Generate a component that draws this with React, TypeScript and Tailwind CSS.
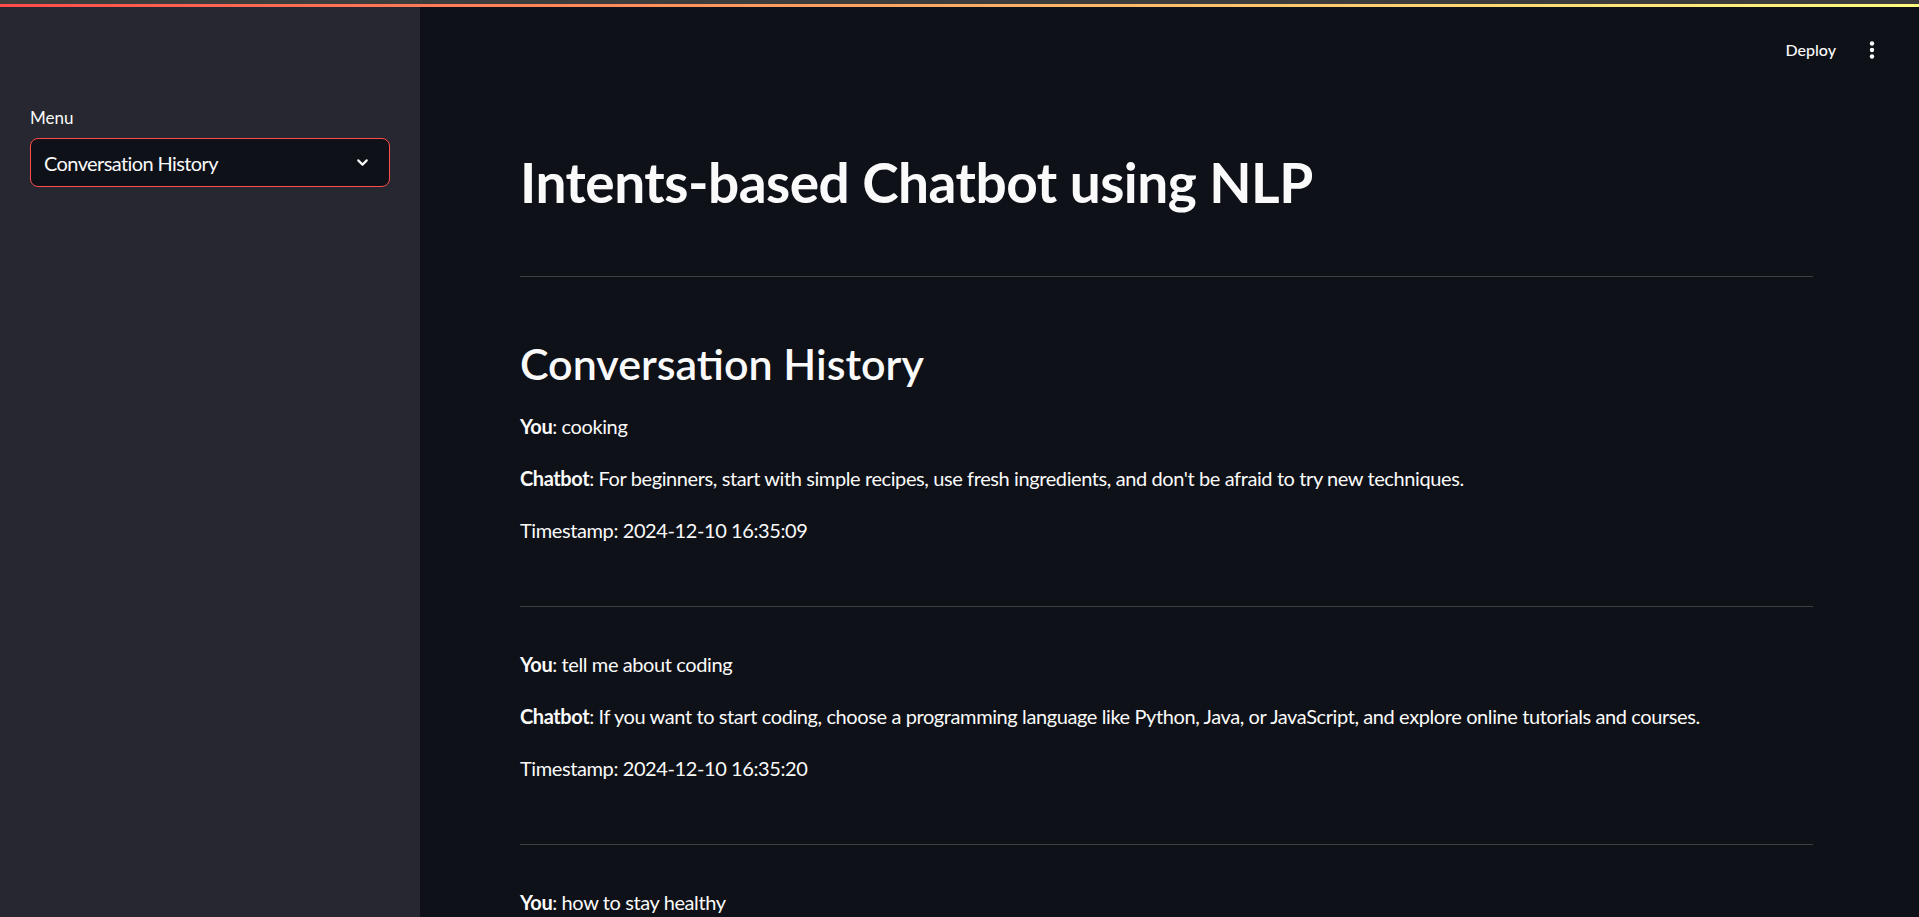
import { ChevronDown } from "lucide-react";

type Entry = { you: string; bot: string; time: string };

const history: Entry[] = [
  {
    you: "cooking",
    bot: "For beginners, start with simple recipes, use fresh ingredients, and don't be afraid to try new techniques.",
    time: "2024-12-10 16:35:09",
  },
  {
    you: "tell me about coding",
    bot: "If you want to start coding, choose a programming language like Python, Java, or JavaScript, and explore online tutorials and courses.",
    time: "2024-12-10 16:35:20",
  },
  {
    you: "how to stay healthy",
    bot: "Eat a balanced diet, exercise regularly, get enough sleep, and manage stress to stay healthy.",
    time: "2024-12-10 16:35:31",
  },
];

const Divider = ({ className = "" }: { className?: string }) => (
  <div className={`h-px w-full bg-[#3d3f44] ${className}`} />
);

const HistoryItem = ({ entry }: { entry: Entry }) => (
  <div className="flex flex-col gap-[20px] text-[20px] leading-[32px] tracking-[-0.4px]">
    <p>
      <span className="font-bold">You</span>: {entry.you}
    </p>
    <p>
      <span className="font-bold">Chatbot</span>: {entry.bot}
    </p>
    <p>Timestamp: {entry.time}</p>
  </div>
);

export default function App() {
  return (
    <div className="flex h-[917px] w-full flex-col overflow-hidden bg-[#0e1117] font-['Lato','Liberation_Sans',sans-serif] text-[#fafafa]">
      <div className="h-[4px] shrink-0 bg-[#3c3c3c]" />
      <div className="h-[3px] shrink-0 bg-gradient-to-r from-[#ff4b4b] to-[#fffd80]" />

      <div className="flex min-h-0 flex-1">
        {/* sidebar */}
        <aside className="w-[420px] shrink-0 bg-[#262730] px-[30px] pt-[100px]">
          <label className="block text-[17px] leading-[22px]">Menu</label>
          <div className="mt-[9px] flex h-[49px] w-[360px] items-center justify-between rounded-[8px] border border-[#ff4b4b] bg-[#0e1117] pl-[13px] pr-[18px]">
            <span className="text-[20px] tracking-[-0.6px]">Conversation History</span>
            <ChevronDown className="h-[17px] w-[17px]" strokeWidth={3} />
          </div>
        </aside>

        {/* main */}
        <main className="flex min-w-0 flex-1 flex-col">
          <header className="flex h-[85px] shrink-0 items-center justify-end gap-[32px] pr-[43px]">
            <span className="text-[16px] font-medium">Deploy</span>
            <svg width="8" height="20" viewBox="0 0 8 20" fill="#fafafa">
              <circle cx="4" cy="3.5" r="2.2" />
              <circle cx="4" cy="10" r="2.2" />
              <circle cx="4" cy="16.5" r="2.2" />
            </svg>
          </header>

          <div className="ml-[100px] mr-[106px]">
            <h1 className="mt-[57px] text-[55px] font-bold leading-[66px] tracking-[-0.5px]">
              Intents-based Chatbot using NLP
            </h1>
            <Divider className="mt-[61px]" />

            <h2 className="mt-[63px] text-[43px] font-semibold leading-[48px]">
              Conversation History
            </h2>

            {history.map((entry, i) => (
              <div key={i}>
                <div className={i === 0 ? "mt-[22px]" : "mt-[41px]"}>
                  <HistoryItem entry={entry} />
                </div>
                <Divider className="mt-[60px]" />
              </div>
            ))}
          </div>
        </main>
      </div>
    </div>
  );
}
